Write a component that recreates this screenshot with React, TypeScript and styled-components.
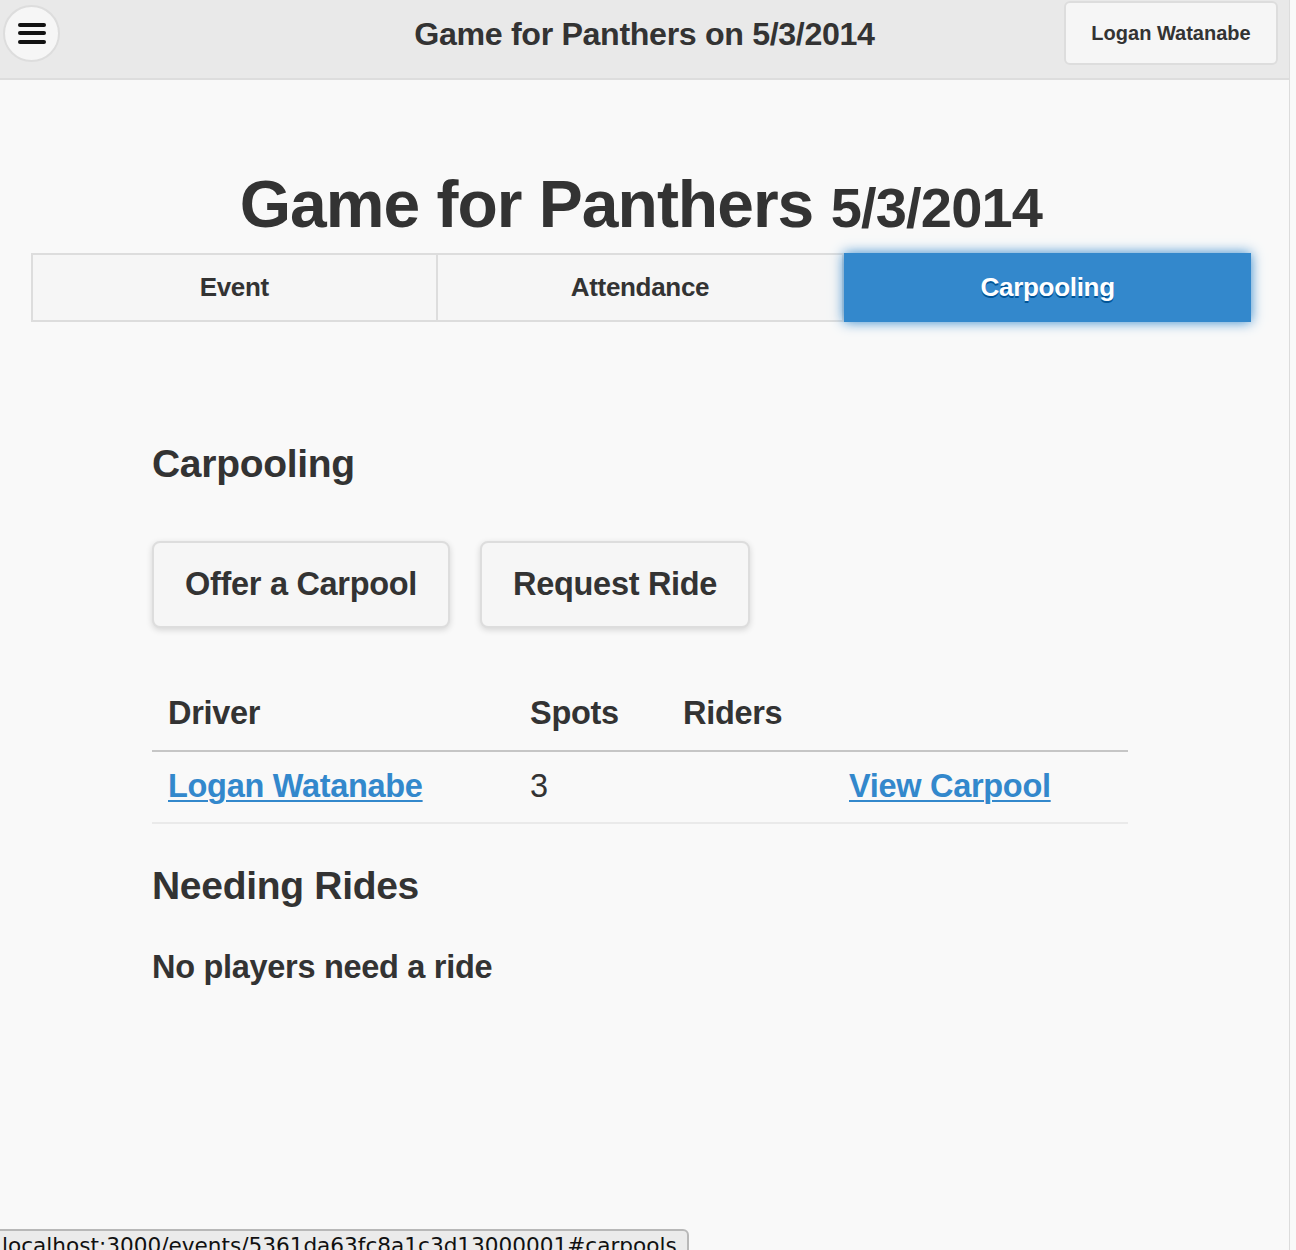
import styled, { createGlobalStyle } from 'styled-components';

const GlobalStyle = createGlobalStyle`
  html, body {
    margin: 0;
    padding: 0;
    background: #f9f9f9;
  }
  body {
    font-family: "Liberation Sans", Arial, Helvetica, sans-serif;
    color: #333;
  }
`;

const Page = styled.div`
  width: 1289px;
  min-height: 1250px;
  border-right: 1px solid #dcdcdc;
  background: #f9f9f9;
  position: relative;
  overflow: hidden;
`;

const Header = styled.header`
  height: 80px;
  background: #e9e9e9;
  border-bottom: 2px solid #dddddd;
  display: flex;
  align-items: center;
  justify-content: space-between;
  padding: 0 11px 0 3px;
  box-sizing: border-box;
  position: relative;
`;

const MenuButton = styled.button`
  width: 57px;
  height: 57px;
  border-radius: 50%;
  background: #f6f6f6;
  border: 2px solid #dddddd;
  display: flex;
  flex-direction: column;
  align-items: center;
  justify-content: center;
  gap: 4.5px;
  padding: 0;
  margin-top: -12px;
`;

const MenuBar = styled.span`
  display: block;
  width: 28px;
  height: 4px;
  border-radius: 2px;
  background: #111;
`;

const HeaderTitle = styled.h1`
  position: absolute;
  left: 0;
  right: 0;
  top: 16px;
  margin: 0;
  text-align: center;
  font-size: 32.2px;
  font-weight: bold;
  color: #333;
  letter-spacing: -0.35px;
  pointer-events: none;
`;

const UserButton = styled.button`
  width: 214px;
  height: 64px;
  margin-top: -12px;
  background: #f6f6f6;
  border: 2px solid #dddddd;
  border-radius: 6px;
  font-family: inherit;
  font-size: 20px;
  font-weight: bold;
  color: #333;
`;

const Content = styled.main`
  padding: 88px 38px 0 31px;
`;

const PageTitle = styled.h1`
  margin: 0 0 9px;
  text-align: center;
  font-size: 66px;
  line-height: 72px;
  font-weight: bold;
  letter-spacing: -1px;
  color: #333;
`;

const TitleDate = styled.small`
  font-size: 56px;
  letter-spacing: -0.8px;
`;

const NavBar = styled.nav`
  display: grid;
  grid-template-columns: repeat(3, 1fr);
  height: 69px;
`;

const NavTab = styled.a<{ $active?: boolean }>`
  display: flex;
  align-items: center;
  justify-content: center;
  font-size: 26px;
  font-weight: bold;
  letter-spacing: -0.3px;
  background: ${p => (p.$active ? '#3388cc' : '#f6f6f6')};
  color: ${p => (p.$active ? '#fff' : '#333')};
  border: 2px solid ${p => (p.$active ? '#3388cc' : '#dddddd')};
  border-left-width: ${p => (p.$active ? '2px' : '0')};
  text-shadow: ${p => (p.$active ? '0 2px 0 #005599' : 'none')};
  box-shadow: ${p => (p.$active ? '0 0 12px #3388cc' : 'none')};
  position: relative;
  &:first-child {
    border-left-width: 2px;
  }
`;

const Section = styled.section`
  width: 976px;
  margin: 120px 0 0 121px;
`;

const SectionTitle = styled.h3`
  margin: 0;
  font-size: 39px;
  line-height: 44px;
  font-weight: bold;
  letter-spacing: -0.3px;
  color: #333;
`;

const ButtonRow = styled.div`
  display: flex;
  gap: 30px;
  margin-top: 55px;
`;

const ActionButton = styled.button`
  height: 87px;
  padding: 0 31px;
  background: #f6f6f6;
  border: 2px solid #dddddd;
  border-radius: 8px;
  box-shadow: 0 2px 6px rgba(0, 0, 0, 0.15);
  font-family: inherit;
  font-size: 32.5px;
  font-weight: bold;
  letter-spacing: -0.3px;
  color: #333;
`;

const Table = styled.table`
  width: 100%;
  margin-top: 57px;
  border-collapse: collapse;
  table-layout: fixed;
  font-size: 32.5px;
`;

const HeadCell = styled.th<{ $w?: number }>`
  text-align: left;
  font-weight: bold;
  letter-spacing: -0.3px;
  padding: 10px 16px 18px;
  border-bottom: 2px solid #c6c6c6;
  width: ${p => (p.$w ? `${p.$w}px` : 'auto')};
`;

const Cell = styled.td`
  padding: 16px 16px 17px;
  border-bottom: 2px solid #eaeaea;
  letter-spacing: -0.3px;
  white-space: nowrap;
`;

const Link = styled.a`
  color: #3388cc;
  font-weight: bold;
  text-decoration: underline;
  text-decoration-thickness: 2px;
  text-underline-offset: 3px;
`;

const NeedingTitle = styled(SectionTitle)`
  margin-top: 40px;
`;

const EmptyNote = styled.p`
  margin: 41px 0 0;
  font-size: 32.5px;
  font-weight: bold;
  letter-spacing: -0.3px;
`;

const StatusBar = styled.div`
  position: absolute;
  left: -2px;
  bottom: -9px;
  height: 26px;
  padding: 0 10px 0 2px;
  background: #ebebeb;
  border: 2px solid #b8b8b8;
  border-radius: 0 6px 0 0;
  font-family: "DejaVu Sans", sans-serif;
  font-size: 21.6px;
  line-height: 30px;
  color: #111;
  white-space: nowrap;
`;

export default function App() {
  return (
    <>
      <GlobalStyle />
      <Page>
        <Header>
          <MenuButton aria-label="Menu">
            <MenuBar />
            <MenuBar />
            <MenuBar />
          </MenuButton>
          <HeaderTitle>Game for Panthers on 5/3/2014</HeaderTitle>
          <UserButton>Logan Watanabe</UserButton>
        </Header>
        <Content>
          <PageTitle>
            Game for Panthers <TitleDate>5/3/2014</TitleDate>
          </PageTitle>
          <NavBar>
            <NavTab>Event</NavTab>
            <NavTab>Attendance</NavTab>
            <NavTab $active>Carpooling</NavTab>
          </NavBar>
          <Section>
            <SectionTitle>Carpooling</SectionTitle>
            <ButtonRow>
              <ActionButton>Offer a Carpool</ActionButton>
              <ActionButton>Request Ride</ActionButton>
            </ButtonRow>
            <Table>
              <thead>
                <tr>
                  <HeadCell $w={330}>Driver</HeadCell>
                  <HeadCell $w={121}>Spots</HeadCell>
                  <HeadCell $w={134}>Riders</HeadCell>
                  <HeadCell />
                </tr>
              </thead>
              <tbody>
                <tr>
                  <Cell><Link href="#">Logan Watanabe</Link></Cell>
                  <Cell>3</Cell>
                  <Cell></Cell>
                  <Cell><Link href="#">View Carpool</Link></Cell>
                </tr>
              </tbody>
            </Table>
            <NeedingTitle>Needing Rides</NeedingTitle>
            <EmptyNote>No players need a ride</EmptyNote>
          </Section>
        </Content>
        <StatusBar>localhost:3000/events/5361da63fc8a1c3d13000001#carpools</StatusBar>
      </Page>
    </>
  );
}
